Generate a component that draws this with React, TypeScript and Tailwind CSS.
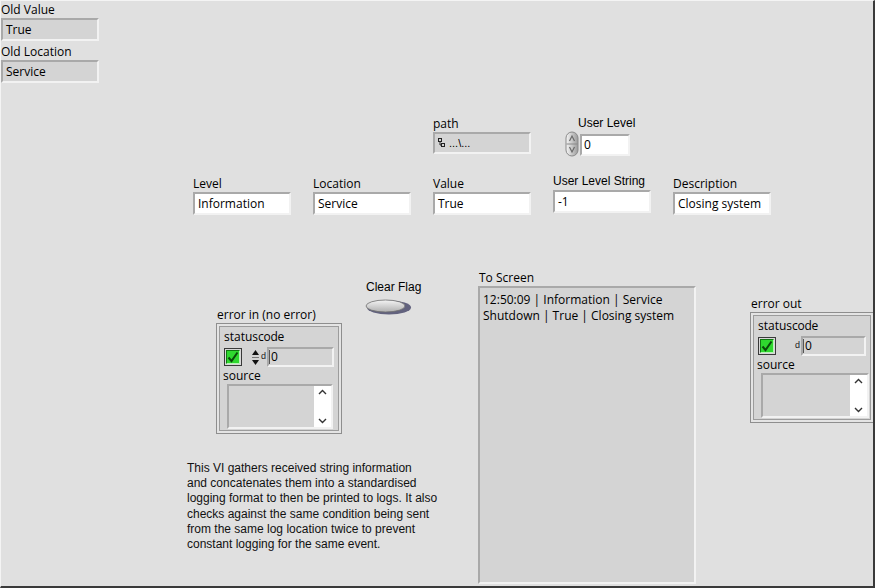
import React from "react"

const ui = "font-['Open_Sans','Noto_Sans',sans-serif]"
const arial = "font-['Liberation_Sans',Arial,sans-serif]"

const sunken =
  "border-2 border-t-[#a9a9a9] border-l-[#a9a9a9] border-b-[#f2f2f2] border-r-[#f2f2f2]"

function Field({
  label,
  value,
  pos,
  control = true,
  labelFont = ui,
}: {
  label: string
  value: string
  pos: string
  control?: boolean
  labelFont?: string
}) {
  return (
    <div className={`absolute flex flex-col w-[98px] ${pos}`}>
      <span className={`text-[12px] leading-[17px] text-black whitespace-nowrap ${labelFont}`}>{label}</span>
      <div
        className={`h-[23px] flex items-center px-[3px] text-[12px] text-black ${ui} ${sunken} ${
          control ? "bg-white" : "bg-[#d4d4d4]"
        }`}
      >
        {value}
      </div>
    </div>
  )
}

function Check() {
  return (
    <div className="w-[18px] h-[18px] border border-[#3a3a3a] bg-[#d8d8d8] p-[1px]">
      <div className="w-full h-full bg-[#2fd82f] border border-t-[#117711] border-l-[#117711] border-b-[#b6f5b6] border-r-[#b6f5b6] flex items-center justify-center">
        <svg width="12" height="12" viewBox="0 0 12 12">
          <path d="M1.5 6.5 L4.5 10 L10.5 1.5" fill="none" stroke="#0a4a0a" strokeWidth="2" />
        </svg>
      </div>
    </div>
  )
}

function Source({ width }: { width: string }) {
  return (
    <div className={`flex h-[45px] bg-[#d4d4d4] ${sunken} ${width}`}>
      <div className="flex-1" />
      <div className="w-[17px] bg-white flex flex-col items-center justify-between py-[3px]">
        <svg width="9" height="6" viewBox="0 0 9 6">
          <path d="M1 5 L4.5 1.5 L8 5" fill="none" stroke="#333" strokeWidth="1.4" />
        </svg>
        <svg width="9" height="6" viewBox="0 0 9 6">
          <path d="M1 1 L4.5 4.5 L8 1" fill="none" stroke="#333" strokeWidth="1.4" />
        </svg>
      </div>
    </div>
  )
}

function ErrorCluster({
  label,
  pos,
  srcWidth,
  arrows,
}: {
  label: string
  pos: string
  srcWidth: string
  arrows: boolean
}) {
  return (
    <div className={`absolute flex flex-col ${pos}`}>
      <span className={`text-[12px] leading-[17px] text-black ml-[1px] ${ui}`}>{label}</span>
      <div className="border border-[#8e8e8e] bg-[#e4e4e4] p-[2px]">
        <div className="border border-[#9c9c9c] bg-[#d4d4d4] px-[4px] pt-[2px] pb-[1px] flex flex-col">
          <span className={`text-[12px] leading-[15px] text-black ${ui}`}>
            status<span className="tracking-[-0.3px]">code</span>
          </span>
          <div className="flex items-center mt-[3px]">
            <Check />
            <div className="w-[10px] ml-[8px] flex flex-col items-center gap-[2px]">
              {arrows && (
                <>
                  <svg width="7" height="5" viewBox="0 0 7 5">
                    <path d="M0 5 L3.5 0 L7 5 Z" fill="#111" />
                  </svg>
                  <div className="w-[7px] h-[1px] bg-[#777]" />
                  <svg width="7" height="5" viewBox="0 0 7 5">
                    <path d="M0 0 L3.5 5 L7 0 Z" fill="#111" />
                  </svg>
                </>
              )}
            </div>
            <span className={`text-[9px] text-[#222] ml-[1px] w-[6px] ${arial}`}>d</span>
            <div className={`flex-1 h-[20px] flex items-center text-[12px] text-black bg-[#d4d4d4] ${ui} ${sunken}`}>
              <div className="w-[1px] h-[14px] bg-[#555] mr-[1px]" />0
            </div>
          </div>
          <span className={`text-[12px] leading-[15px] text-black mt-[1px] -ml-[1px] ${ui}`}>source</span>
          <div className="mt-[1px] ml-[3px]">
            <Source width={srcWidth} />
          </div>
        </div>
      </div>
    </div>
  )
}

export default function App() {
  return (
    <div className="w-[875px] h-[588px] relative overflow-hidden bg-[#e0e0e0] border-t border-l border-t-[#f4f4f4] border-l-[#f4f4f4] border-r-2 border-b-2 border-r-[#3a3a3a] border-b-[#3a3a3a]">
      <Field label="Old Value" value="True" pos="left-0 top-0" control={false} />
      <Field label="Old Location" value="Service" pos="left-0 top-[42px]" control={false} />

      {/* path indicator */}
      <div className="absolute flex flex-col w-[98px] left-[432px] top-[114px]">
        <span className={`text-[12px] leading-[17px] text-black ${ui}`}>path</span>
        <div className={`h-[22px] flex items-center px-[3px] bg-[#d4d4d4] ${sunken}`}>
          <svg width="7" height="10" viewBox="0 0 7 10" className="mr-[4px]">
            <rect x="0.5" y="0.5" width="3" height="3" fill="none" stroke="#222" />
            <rect x="3.5" y="5.5" width="3" height="3" fill="none" stroke="#222" />
            <path d="M2 4 V7 H3.5" fill="none" stroke="#222" />
          </svg>
          <span className={`text-[11px] text-black ${arial}`}>...\...</span>
        </div>
      </div>

      {/* User Level numeric */}
      <div className="absolute flex flex-col left-[564px] top-[114px]">
        <span className={`text-[12px] leading-[17px] text-black ml-[13px] ${arial}`}>User Level</span>
        <div className="flex items-center">
          <svg width="15" height="26" viewBox="0 0 15 26" className="-mt-[1px]">
            <defs>
              <linearGradient id="sp" x1="0" x2="1">
                <stop offset="0" stopColor="#f6f6f6" />
                <stop offset="1" stopColor="#9a9a9a" />
              </linearGradient>
            </defs>
            <rect x="1" y="1" width="12" height="24" rx="6" fill="url(#sp)" stroke="#8a8a8a" />
            <line x1="1.5" y1="13" x2="12.5" y2="13" stroke="#8a8a8a" />
            <path d="M4.5 10 L7 5 L9.5 10" fill="none" stroke="#6a6a6a" strokeWidth="1.2" />
            <path d="M4.5 16 L7 21 L9.5 16" fill="none" stroke="#6a6a6a" strokeWidth="1.2" />
          </svg>
          <div className={`w-[50px] h-[22px] flex items-center px-[2px] text-[12px] bg-white ${ui} ${sunken}`}>0</div>
        </div>
      </div>

      <Field label="Level" value="Information" pos="left-[192px] top-[174px]" />
      <Field label="Location" value="Service" pos="left-[312px] top-[174px]" />
      <Field label="Value" value="True" pos="left-[432px] top-[174px]" />
      <Field label="User Level String" value="-1" pos="left-[552px] top-[172px]" labelFont={arial} />
      <Field label="Description" value="Closing system" pos="left-[672px] top-[174px]" />

      {/* Clear Flag */}
      <div className="absolute flex flex-col left-[364px] top-[278px]">
        <span className={`text-[12px] leading-[17px] text-black ml-[1px] ${arial}`}>Clear Flag</span>
        <svg width="48" height="20" viewBox="0 0 48 20">
          <defs>
            <linearGradient id="cf" x1="0" y1="0" x2="0" y2="1">
              <stop offset="0" stopColor="#f4f4f4" />
              <stop offset="1" stopColor="#b0b0b0" />
            </linearGradient>
          </defs>
          <ellipse cx="24" cy="11.5" rx="22" ry="7" fill="#62627e" />
          <ellipse cx="20.5" cy="10" rx="19.5" ry="6" fill="url(#cf)" stroke="#6e6e6e" strokeWidth="0.8" />
        </svg>
      </div>

      {/* To Screen */}
      <div className="absolute flex flex-col left-[477px] top-[268px]">
        <span className={`text-[12px] leading-[17px] text-black ml-[1px] ${ui}`}>To Screen</span>
        <div
          className={`w-[218px] h-[298px] bg-[#d4d4d4] px-[3px] pt-[4px] text-[12px] leading-[16px] text-black ${ui} ${sunken}`}
        >
          12:50:09 | Information | Service
          <br />
          Shutdown | True | Closing system
        </div>
      </div>

      <ErrorCluster label="error in (no error)" pos="left-[215px] top-[305px] w-[126px]" srcWidth="w-[106px]" arrows />
      <ErrorCluster label="error out" pos="left-[749px] top-[294px] w-[124px]" srcWidth="w-[108px]" arrows={false} />

      <p
        className={`absolute left-[186px] top-[460px] w-[270px] text-[12px] leading-[15.2px] text-[#111] ${arial}`}
      >
        This VI gathers received string information
        <br />
        and concatenates them into a standardised
        <br />
        logging format to then be printed to logs. It also
        <br />
        checks against the same condition being sent
        <br />
        from the same log location twice to prevent
        <br />
        constant logging for the same event.
      </p>
    </div>
  )
}
